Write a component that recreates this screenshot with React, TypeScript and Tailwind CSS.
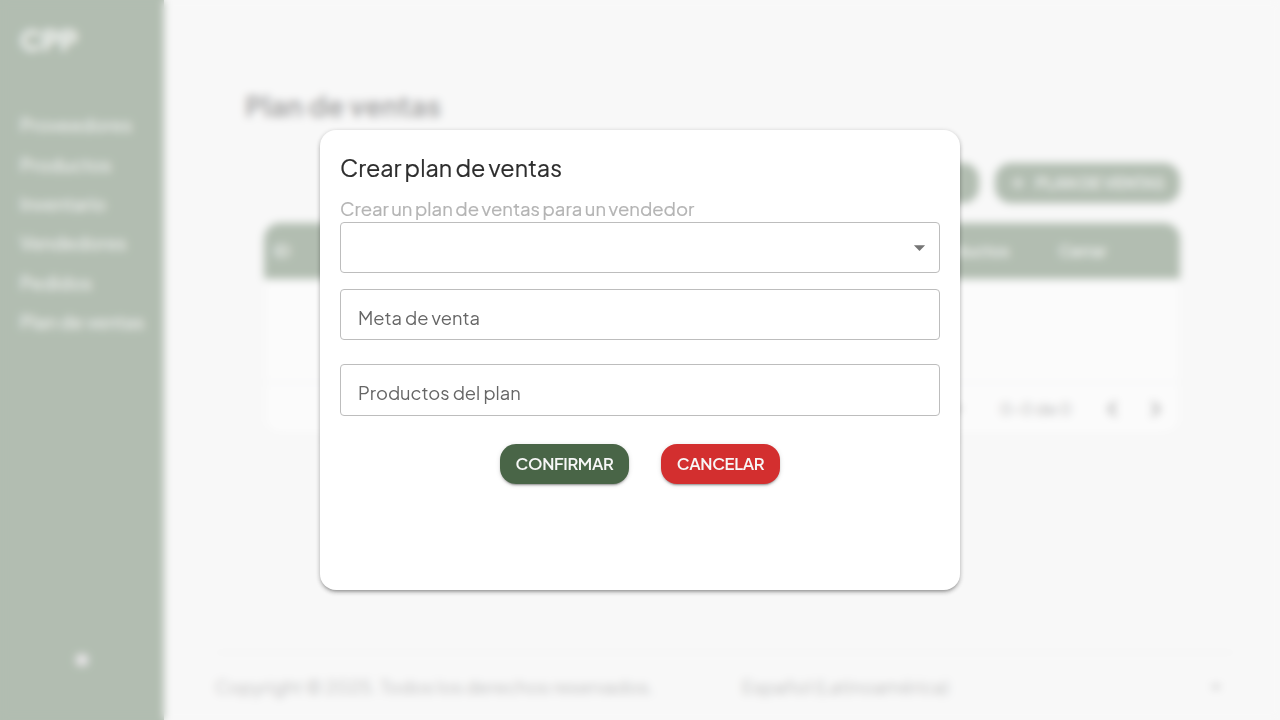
import { ChevronLeft, ChevronRight, Plus, Settings } from "lucide-react";

const links = ["Proveedores", "Productos", "Inventario", "Vendedores", "Pedidos", "Plan de ventas"];

function Caret({ className }: { className: string }) {
  return (
    <svg viewBox="0 0 24 24" className={className} fill="currentColor">
      <path d="M7 10l5 5 5-5z" />
    </svg>
  );
}

function Sidebar() {
  return (
    <aside className="flex w-[164px] shrink-0 flex-col bg-[#496547] px-5 text-white">
      <div className="mt-5 flex h-10 items-center text-[28px] font-bold whitespace-nowrap">CPP</div>
      <nav className="mt-[45px] flex flex-col">
        {links.map((label) => (
          <a key={label} className="flex h-[39.4px] items-center text-[18px] font-medium tracking-[0.05px] whitespace-nowrap text-white/90">
            {label}
          </a>
        ))}
      </nav>
      <div className="mt-auto mb-[50px] flex justify-center">
        <Settings className="size-5 p-1 text-[#d8d0d8]" strokeWidth={7} />
      </div>
    </aside>
  );
}

function Page() {
  return (
    <div className="flex h-[720px] w-[1280px] overflow-hidden bg-[#f8f8f8]">
      <Sidebar />
      <main className="flex flex-1 flex-col pt-[88px] pr-[45px] pl-[51px]">
        <h1 className="h-10 pl-[30px] text-[28px] leading-[36px] font-bold tracking-[0.05px] text-[#2b2b2b]">Plan de ventas</h1>
        <div className="mt-[35px] mr-[55px] flex justify-end gap-4">
          <button className="h-10 w-[184px] rounded-2xl bg-[#496547] text-white shadow">PRODUCTOS</button>
          <button className="flex h-10 w-[185px] items-center justify-center gap-2 rounded-2xl bg-[#496547] pr-[3px] text-base font-semibold tracking-[-0.1px] whitespace-nowrap text-white/90 shadow">
            <Plus className="size-5" strokeWidth={2.2} />
            PLAN DE VENTAS
          </button>
        </div>
        <section className="mt-5 mr-[55px] ml-[49px] flex h-[212px] flex-col overflow-hidden rounded-2xl bg-white shadow">
          <div className="flex h-14 shrink-0 items-center bg-[#496547] text-base font-semibold text-white/90">
            <span className="w-[651px] pl-[10px]">ID</span>
            <span className="w-36 pl-[13px]">Productos</span>
            <span className="tracking-[-0.2px]">Cerrar</span>
          </div>
          <div className="h-[104px] border-b border-gray-200" />
          <div className="flex flex-1 items-center justify-end pr-3 text-base tracking-[0.2px] text-[#444]">
            <Caret className="mr-[31px] size-6" />
            <span className="w-[100px]">0–0 de 0</span>
            <ChevronLeft className="mr-5 size-6" strokeWidth={3} />
            <ChevronRight className="size-6" strokeWidth={3} />
          </div>
        </section>
        <footer className="mt-auto flex h-[68px] items-center border-t border-[#e0e0e0] text-[18px] tracking-[0.13px] text-[#666]">
          <span className="w-[527px]">Copyright © 2025. Todos los derechos reservados.</span>
          <span>Español (Latinoamérica)</span>
          <Caret className="mr-[7px] ml-auto size-6" />
        </footer>
      </main>
    </div>
  );
}

function Dialog() {
  return (
    <div className="flex h-[460px] w-[640px] flex-col rounded-2xl bg-white px-5 shadow-[0_3px_3px_-2px_rgba(0,0,0,0.2),0_3px_4px_0_rgba(0,0,0,0.14),0_1px_5px_0_rgba(0,0,0,0.2)]">
      <h2 className="mt-[22px] h-8 text-[23.3px] leading-8 font-normal [word-spacing:-0.7px] text-[#2d2d2d] [-webkit-text-stroke:0.2px_#2d2d2d]">Crear plan de ventas</h2>
      <p className="mt-[11px] h-[27px] text-[18.5px] leading-[27px] font-normal [word-spacing:-0.6px] text-[#b4b4b4] [-webkit-text-stroke:0.2px_#b4b4b4]">Crear un plan de ventas para un vendedor</p>
      <div className="flex h-[51px] items-center justify-end rounded-[4px] border border-[#bdbdbd] pr-[6px]">
        <Caret className="size-[27px] text-[#757575]" />
      </div>
      <div className="mt-4 flex h-[51px] items-center rounded-[4px] border border-[#bdbdbd] px-[17px] pt-[6px] text-[18.3px] text-[#666]">
        Meta de venta
      </div>
      <div className="mt-6 flex h-[52px] items-center rounded-[4px] border border-[#bdbdbd] px-[17px] pt-[5px] text-[18.3px] text-[#666]">
        Productos del plan
      </div>
      <div className="mt-7 flex justify-center gap-8">
        <button className="h-10 w-[129px] rounded-2xl bg-[#496547] text-[16.5px] font-semibold tracking-[-0.35px] text-[#f7f7f7] shadow-[0_3px_1px_-2px_rgba(0,0,0,0.2),0_2px_2px_0_rgba(0,0,0,0.14),0_1px_5px_0_rgba(0,0,0,0.12)]">CONFIRMAR</button>
        <button className="h-10 w-[119px] rounded-2xl bg-[#d32f2f] text-[16.5px] font-semibold tracking-[-0.35px] text-[#f7f7f7] shadow-[0_3px_1px_-2px_rgba(0,0,0,0.2),0_2px_2px_0_rgba(0,0,0,0.14),0_1px_5px_0_rgba(0,0,0,0.12)]">CANCELAR</button>
      </div>
    </div>
  );
}

export default function App() {
  return (
    <div className="h-[720px] w-[1280px] overflow-hidden font-['Plus_Jakarta_Sans','Inter',sans-serif]">
      <Page />
      <div className="fixed inset-0 flex items-center justify-center bg-[#f8f8f8]/60 backdrop-blur-[4px]">
        <Dialog />
      </div>
    </div>
  );
}
